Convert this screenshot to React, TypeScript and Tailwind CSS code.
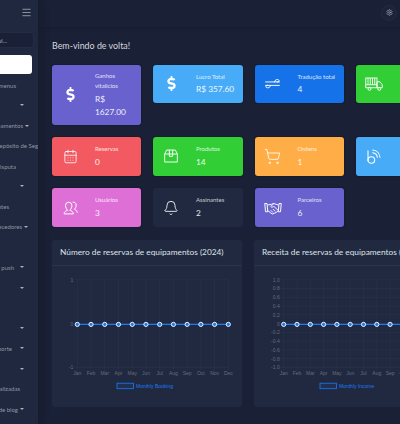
import React from "react";
import { FaDollarSign } from "react-icons/fa";
import { Bell, CalendarDays, Menu, ShoppingCart, Settings } from "lucide-react";

const sideRows: { t?: string; pr: number; c?: boolean; g?: number }[] = [
  { t: "menus", pr: 22 },
  { pr: 14, c: true },
  { t: "pamentos", pr: 9, c: true, g: 2 },
  { t: "Depósito de Seg", pr: 0 },
  { t: "Disputa", pr: 22 },
  { pr: 14, c: true },
  { t: "ntes", pr: 29 },
  { t: "ecedores", pr: 10, c: true, g: 2 },
  { pr: 14 },
  { t: "r push", pr: 14, c: true, g: 6 },
  { pr: 14, c: true },
  { pr: 14 },
  { pr: 14, c: true },
  { t: "porte", pr: 14, c: true, g: 8 },
  { pr: 14, c: true },
  { t: "alizadas", pr: 18 },
  { t: "de blog", pr: 14, c: true, g: 2 },
];

const Chev = ({ g }: { g: number }) => (
  <span className="inline-block w-0 h-0 border-x-[2px] border-x-transparent border-t-[2px] border-t-[#a9afbb]" style={{ marginLeft: g }} />
);

const Transfer = () => (
  <svg width="15" height="15" viewBox="0 0 24 24" fill="none" stroke="currentColor" strokeWidth="1.5" strokeLinecap="round">
    <path d="M1 9.500h22M15 9.500c0-4 7-5.500 7.500-2S19 9.500 19 9.500" />
    <path d="M1 15h22M9 15c0 4-7 5.500-7.500 2S5 15 5 15" />
  </svg>
);
const TruckI = () => (
  <svg width="18" height="18" viewBox="0 0 24 24" fill="none" stroke="currentColor" strokeWidth="1.2">
    <rect x="1" y="4" width="15" height="13" />
    <path d="M4 4v9M7 4v9M10 4v9M13 4v9M1 13h15M16 9h4l3 4v4h-7z" />
    <circle cx="6" cy="18.500" r="2" />
    <circle cx="19" cy="18.500" r="2" />
  </svg>
);
const BRss = () => (
  <svg width="16" height="16" viewBox="0 0 24 24" fill="none" stroke="currentColor" strokeWidth="1.600" strokeLinecap="round">
    <path d="M3 4v15" />
    <circle cx="8" cy="18" r="5" />
    <path d="M10 7c4 .5 6.500 3 7 7M10 3c6 .5 10.500 5 11 11" />
  </svg>
);
const UsersI = () => (
  <svg width="17" height="17" viewBox="0 0 24 24" fill="none" stroke="currentColor" strokeWidth="1.400">
    <path d="M3 21c0-3 2-4 5-5-2-2-3-4-3-7a4.500 4.500 0 0 1 9 0c0 3-1 5-3 7 3 1 5 2 5 5z" />
    <path d="M15 4.500a4 4 0 0 1 5 4c0 2.500-1 4.500-2.500 6 2 .8 4 2 4 5" />
  </svg>
);
const BoxI = () => (
  <svg width="16" height="16" viewBox="0 0 24 24" fill="none" stroke="currentColor" strokeWidth="1.400" strokeLinejoin="round">
    <path d="M2.500 9h19v12h-19zM2.500 9l3-6h13l3 6" />
    <path d="M9.500 3v9.500h5V3" />
  </svg>
);
const Shake = () => (
  <svg width="18" height="18" viewBox="0 0 24 24" fill="none" stroke="currentColor" strokeWidth="1.300" strokeLinejoin="round">
    <path d="M1 6h3l1 11H2zM23 6h-3l-1 11h3z" />
    <path d="M5 8l5-1 3-1 6 2M13 6l-4 4c1 1.500 3 1 4-.5l6 6M5 15.500l6 4.500 3-1 3-1.500 2-2" />
    <path d="M9 15l3 3M12 13.500l3 3" />
  </svg>
);

function Stat({ bg, label, value, icon, tall, dim }: { bg: string; label: string; value: string; icon: React.ReactNode; tall?: boolean; dim?: boolean }) {
  return (
    <div className={`flex items-center rounded-[3px] text-white ${bg} ${tall ? "h-[60.500px]" : "h-[38.800px]"} ${dim ? "" : "shadow-[0_0_1px_1px_rgba(0,0,0,0.12)]"}`}>
      <div className="w-[43px] shrink-0 flex justify-center pr-[7px]">{icon}</div>
      <div className="min-w-0 flex-1 pr-[8px]">
        <div className={`text-[6px] leading-[10.700px] ${dim ? "text-[#c9ccd3]" : "text-white/80"}`}>{label}</div>
        <div className="text-[8.300px] leading-[13px] mt-[1px] text-white/90">{value}</div>
      </div>
    </div>
  );
}

function Chart({ title, labels, x0, step, yLabels, legend, legendX }: { title: string; labels: string[]; x0: number; step: number; yLabels: string[]; legend: string; legendX: number }) {
  const top = 13.7;
  const zero = 58.4;
  const bot = 101.4;
  const dy = (bot - top) / (yLabels.length - 1);
  const left = x0;
  const vw = 190;
  return (
    <div className="w-[190px] shrink-0 h-[167.600px] bg-[#202940] rounded-[3px] overflow-hidden">
      <div className="h-[26.600px] flex items-center px-[8px] border-b border-white/5 text-[8.300px] text-[#dfe2e6] whitespace-nowrap">{title}</div>
      <svg width={vw} height="140" viewBox={`0 0 ${vw} 140`} className="block overflow-visible font-['Liberation_Sans',sans-serif]">
        {yLabels.map((l, i) => (
          <g key={l}>
            <line x1={left - 4} x2={left + 11 * step} y1={top + dy * i} y2={top + dy * i} stroke="rgba(255,255,255,0.05)" strokeWidth="0.6" />
            <text x={left - 4} y={top + dy * i + 2} textAnchor="end" fontSize="5" fill="#666c7a">{l}</text>
          </g>
        ))}
        {labels.map((l, i) => (
          <g key={l}>
            <line x1={left + step * i} x2={left + step * i} y1={top} y2={bot + 3} stroke="rgba(255,255,255,0.05)" strokeWidth="0.6" />
            <text x={left + step * i} y={bot + 8} textAnchor="middle" fontSize="5" fill="#666c7a">{l}</text>
          </g>
        ))}
        <line x1={left} x2={left + 11 * step} y1={zero} y2={zero} stroke="#1d7af3" strokeWidth="1.300" />
        {labels.map((l, i) => (
          <circle key={l} cx={left + step * i} cy={zero} r="2.100" fill="#1d7af3" stroke="#ffffff" strokeWidth="0.9" />
        ))}
        <rect x={legendX} y="117.200" width="16.500" height="5.500" fill="rgba(29,122,243,0.1)" stroke="#1d7af3" strokeWidth="0.8" />
        <text x={legendX + 19} y="122" fontSize="5" fill="#1d7af3">{legend}</text>
      </svg>
    </div>
  );
}

const months = ["Jan", "Feb", "Mar", "Apr", "May", "Jun", "Jul", "Aug", "Sep", "Oct", "Nov", "Dec"];

export default function App() {
  const money = <FaDollarSign size={15} />;
  return (
    <div className="w-[400px] h-[424px] overflow-hidden flex bg-[#1a2035] font-['Lato','Noto_Sans',sans-serif]">
      <aside className="w-[38px] shrink-0 bg-[#1f283e] overflow-hidden shadow-[4px_0_8px_rgba(0,0,0,0.12)] z-10 flex flex-col">
        <div className="h-[27px] shrink-0 flex justify-end items-center pr-[6px] pb-[2px] text-white/90">
          <Menu size={11} strokeWidth={1.200} />
        </div>
        <div className="mt-[5px] h-[16px] w-[34px] shrink-0 bg-[#1a2035] rounded-r-[3px] border border-l-0 border-[#232c44] flex justify-end items-center pr-[26px] text-[6px] text-[#a9afbb] whitespace-nowrap">ul...</div>
        <div className="mt-[7px] h-[19px] w-[32px] shrink-0 bg-white rounded-r-[3px]" />
        <div className="mt-[1px] flex flex-col">
          {sideRows.map((r, i) => (
            <div key={i} className="h-[20.250px] flex items-center justify-end whitespace-nowrap text-[6px] text-[#9096a4]" style={{ paddingRight: r.pr }}>
              {r.t ? <span>{r.t}</span> : null}
              {r.c ? <Chev g={r.g ?? 0} /> : null}
            </div>
          ))}
        </div>
      </aside>
      <div className="flex-1 min-w-0 flex flex-col">
        <header className="h-[27px] shrink-0 flex items-center justify-end pr-[3px] pb-[2px] shadow-[0_1px_4px_rgba(0,0,0,0.12)] bg-[#1a2035]">
          <div className="w-[16px] h-[16px] rounded-full bg-[#1d2439] border border-[#232b42] flex items-center justify-center text-[#aeb3bf]">
            <Settings size={7} />
          </div>
        </header>
        <main className="pl-[14px] pt-[11px] flex flex-col">
          <h1 className="text-[8.900px] leading-[16px] text-[#d5d8de] font-normal">Bem-vindo de volta!</h1>
          <div className="mt-[10.500px] grid grid-cols-[89px_89.500px_89.500px_89px] gap-x-[12px] w-[420px] items-start">
            <Stat bg="bg-[#6861ce]" label="Ganhos vitalícios" value="R$ 1627.00" icon={money} tall />
            <Stat bg="bg-[#48abf7]" label="Lucro Total" value="R$ 357.60" icon={money} />
            <Stat bg="bg-[#1572e8]" label="Tradução total" value="4" icon={<Transfer />} />
            <Stat bg="bg-[#31ce36]" label="" value="" icon={<TruckI />} />
          </div>
          <div className="mt-[12px] grid grid-cols-[89px_89.500px_89.500px_89px] gap-x-[12px] w-[420px]">
            <Stat bg="bg-[#f25961]" label="Reservas" value="0" icon={<CalendarDays size={15} strokeWidth={1.300} />} />
            <Stat bg="bg-[#31ce36]" label="Produtos" value="14" icon={<BoxI />} />
            <Stat bg="bg-[#ffad46]" label="Ordens" value="1" icon={<ShoppingCart size={17} strokeWidth={1.200} />} />
            <Stat bg="bg-[#48abf7]" label="" value="" icon={<BRss />} />
          </div>
          <div className="mt-[12.500px] grid grid-cols-[89px_89.500px_89.500px_89px] gap-x-[12px] w-[420px]">
            <Stat bg="bg-[#de6fd6]" label="Usuários" value="3" icon={<UsersI />} />
            <Stat bg="bg-[#202940]" label="Assinantes" value="2" icon={<Bell size={16} strokeWidth={1.300} />} dim />
            <Stat bg="bg-[#6861ce]" label="Parceiros" value="6" icon={<Shake />} />
          </div>
          <div className="mt-[12.600px] flex gap-x-[12px]">
            <Chart title="Número de reservas de equipamentos (2024)" labels={months} x0={25.300} step={13.730} yLabels={["1", "0", "-1"]} legend="Monthly Booking" legendX={65} />
            <Chart title="Receita de reservas de equipamentos (2024)" labels={months} x0={29.700} step={13.300} yLabels={["1.0", "0.8", "0.6", "0.4", "0.2", "0", "-0.2", "-0.4", "-0.6", "-0.8", "-1.0"]} legend="Monthly Income" legendX={66} />
          </div>
        </main>
      </div>
    </div>
  );
}
